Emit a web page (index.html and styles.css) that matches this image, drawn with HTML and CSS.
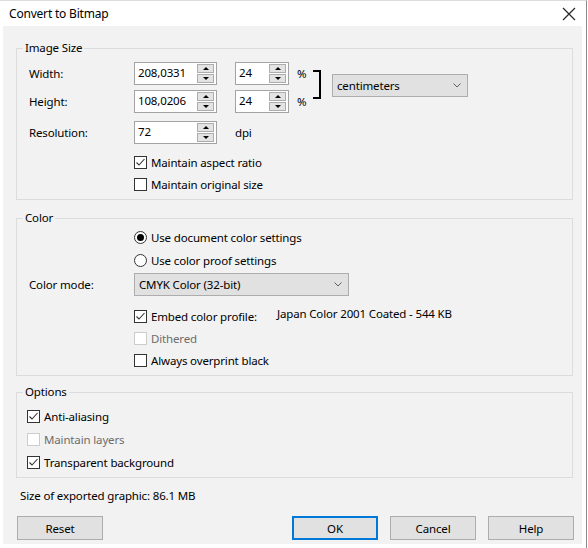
FILE: index.html
```html
<!DOCTYPE html>
<html>
<head>
<meta charset="utf-8">
<link rel="stylesheet" href="styles.css">
</head>
<body>
<div class="window">
  <div class="titlebar">
    <span class="title">Convert to Bitmap</span>
    <svg class="close" width="14" height="14" viewBox="0 0 14 14"><path d="M1 1L13 13M13 1L1 13" stroke="#2b2b2b" stroke-width="1.3" fill="none"/></svg>
  </div>
  <div class="client">
    <fieldset class="group">
      <legend>Image Size</legend>
      <div class="body body-size">
        <div class="size-top">
          <div class="size-rows">
            <div class="row">
              <span class="lbl">Width:</span>
              <div class="spin spin-wide"><span class="val">208,0331</span><span class="spin-btns"><span class="sb"><i class="up"></i></span><span class="sb"><i class="down"></i></span></span></div>
              <div class="spin spin-pct"><span class="val">24</span><span class="spin-btns"><span class="sb"><i class="up"></i></span><span class="sb"><i class="down"></i></span></span></div>
              <span class="unit">%</span>
            </div>
            <div class="row">
              <span class="lbl">Height:</span>
              <div class="spin spin-wide"><span class="val">108,0206</span><span class="spin-btns"><span class="sb"><i class="up"></i></span><span class="sb"><i class="down"></i></span></span></div>
              <div class="spin spin-pct"><span class="val">24</span><span class="spin-btns"><span class="sb"><i class="up"></i></span><span class="sb"><i class="down"></i></span></span></div>
              <span class="unit">%</span>
            </div>
          </div>
          <div class="bracket"></div>
          <div class="dropdown dd-units"><span>centimeters</span><svg class="chev" width="8" height="5" viewBox="0 0 8 5"><path d="M0.5 0.5L4 4L7.5 0.5" stroke="#606060" fill="none"/></svg></div>
        </div>
        <div class="row row-res">
          <span class="lbl">Resolution:</span>
          <div class="spin spin-wide"><span class="val">72</span><span class="spin-btns"><span class="sb"><i class="up"></i></span><span class="sb"><i class="down"></i></span></span></div>
          <span class="dpi">dpi</span>
        </div>
        <div class="checks indent">
          <label class="check"><span class="box"><svg width="13" height="13" viewBox="0 0 13 13"><path d="M2.5 6.5L5 9L10.5 3" stroke="#333" stroke-width="1.1" fill="none"/></svg></span>Maintain aspect ratio</label>
          <label class="check"><span class="box"></span>Maintain original size</label>
        </div>
      </div>
    </fieldset>

    <fieldset class="group group-color">
      <legend>Color</legend>
      <div class="body body-color">
        <label class="radio indent r1"><span class="circle on"></span>Use document color settings</label>
        <label class="radio indent r2"><span class="circle"></span>Use color proof settings</label>
        <div class="row row-mode">
          <span class="lbl">Color mode:</span>
          <div class="dropdown dd-mode"><span>CMYK Color (32-bit)</span><svg class="chev" width="8" height="5" viewBox="0 0 8 5"><path d="M0.5 0.5L4 4L7.5 0.5" stroke="#606060" fill="none"/></svg></div>
        </div>
        <div class="checks indent color-checks">
          <div class="embed-row">
            <label class="check"><span class="box"><svg width="13" height="13" viewBox="0 0 13 13"><path d="M2.5 6.5L5 9L10.5 3" stroke="#333" stroke-width="1.1" fill="none"/></svg></span>Embed color profile:</label>
            <span class="profile">Japan Color 2001 Coated - 544 KB</span>
          </div>
          <label class="check disabled"><span class="box"></span>Dithered</label>
          <label class="check"><span class="box"></span>Always overprint black</label>
        </div>
      </div>
    </fieldset>

    <fieldset class="group group-options">
      <legend>Options</legend>
      <div class="body body-options">
        <label class="check"><span class="box"><svg width="13" height="13" viewBox="0 0 13 13"><path d="M2.5 6.5L5 9L10.5 3" stroke="#333" stroke-width="1.1" fill="none"/></svg></span>Anti-aliasing</label>
        <label class="check disabled"><span class="box"></span>Maintain layers</label>
        <label class="check"><span class="box"><svg width="13" height="13" viewBox="0 0 13 13"><path d="M2.5 6.5L5 9L10.5 3" stroke="#333" stroke-width="1.1" fill="none"/></svg></span>Transparent background</label>
      </div>
    </fieldset>

    <div class="size-info">Size of exported graphic: 86.1 MB</div>

    <div class="buttons">
      <button class="btn">Reset</button>
      <div class="btn-group">
        <button class="btn btn-default">OK</button>
        <button class="btn">Cancel</button>
        <button class="btn">Help</button>
      </div>
    </div>
  </div>
</div>
</body>
</html>
```

FILE: styles.css
```css
* { box-sizing: border-box; }

body {
  margin: 0;
  background: #ffffff;
  font-family: "Noto Sans", "Open Sans", sans-serif;
  font-size: 11.5px;
  letter-spacing: -0.15px;
  color: #000000;
}

.window {
  width: 587px;
  height: 548px;
  border-top: 1px solid #dcdcdc;
  border-right: 1px solid #8a8a8a;
  display: flex;
  flex-direction: column;
}

.titlebar {
  height: 25px;
  display: flex;
  align-items: center;
  justify-content: space-between;
  padding: 0 10px 0 9px;
}

.title { font-size: 12px; line-height: 16px; letter-spacing: -0.2px; }

.close { display: block; margin-top: 1px; }

.client {
  flex: 1;
  margin: 0 4px 4px 3px;
  background: #f2f2f2;
  padding: 14px 9px 0 13px;
  display: flex;
  flex-direction: column;
}

.group {
  margin: 0;
  padding: 0;
  border: 1px solid #dcdcdc;
  min-width: 0;
}

.group legend {
  margin-left: 6px;
  padding: 0 2px;
  line-height: 16px;
  height: 16px;
}

.group-color { margin-top: 10px; }
.group-options { margin-top: 8px; }

.body-size { padding: 6px 0 4px 12px; }
.body-color { padding: 0 0 4px 12px; }
.body-options { padding: 5px 0 3px 10px; }

.row {
  display: flex;
  align-items: center;
  height: 23px;
}

.size-top {
  display: flex;
  align-items: flex-start;
}

.size-rows {
  display: flex;
  flex-direction: column;
  gap: 5px;
}

.lbl { width: 105px; flex: none; }

.spin {
  display: flex;
  align-items: stretch;
  height: 23px;
  background: #ffffff;
  border: 1px solid #a3a3a3;
  flex: none;
}

.spin-wide { width: 83px; }
.spin-pct { width: 54px; margin-left: 18px; }

.val {
  flex: 1;
  padding-left: 3px;
  line-height: 19px;
}

.spin-btns {
  width: 17px;
  margin: 1px 2px 1px 0;
  display: flex;
  flex-direction: column;
  gap: 1px;
}

.sb {
  flex: 1;
  background: #e3e3e3;
  border: 1px solid #adadad;
  display: flex;
  align-items: center;
  justify-content: center;
}

.sb i {
  display: block;
  width: 0;
  height: 0;
  border-left: 3px solid transparent;
  border-right: 3px solid transparent;
}

.sb i.up { border-bottom: 3px solid #000; }
.sb i.down { border-top: 3px solid #000; }

.unit { width: 24px; padding-left: 8px; flex: none; }

.bracket {
  width: 8px;
  height: 29px;
  margin-top: 8px;
  border: 2px solid #000;
  border-left: none;
  flex: none;
}

.dropdown {
  height: 23px;
  background: #e1e1e1;
  border: 1px solid #adadad;
  display: flex;
  align-items: center;
  justify-content: space-between;
  padding: 0 6px 0 4px;
  flex: none;
}

.dd-units { width: 136px; margin-left: 11px; margin-top: 12px; }
.dd-mode { width: 215px; }

.row-res { margin-top: 8px; }
.dpi { margin-left: 18px; }

.indent { margin-left: 105px; }

.checks {
  display: flex;
  flex-direction: column;
  margin-top: 7px;
}

.check {
  display: flex;
  align-items: center;
  height: 22px;
}

.body-options .check { height: 23px; }

.box {
  width: 13px;
  height: 13px;
  border: 1px solid #333333;
  background: #ffffff;
  margin-right: 4px;
  flex: none;
  position: relative;
}

.box svg { display: block; margin: -1px 0 0 -1px; }

.check.disabled { color: #6d6d6d; }
.check.disabled .box { border-color: #cccccc; }

.radio {
  display: flex;
  align-items: center;
  height: 22px;
}

.r2 { margin-top: 1px; }

.circle {
  width: 13px;
  height: 13px;
  border: 1px solid #333333;
  border-radius: 50%;
  background: #ffffff;
  margin-right: 4px;
  display: flex;
  align-items: center;
  justify-content: center;
}

.circle.on::after {
  content: "";
  width: 7px;
  height: 7px;
  border-radius: 50%;
  background: #000000;
}

.row-mode { margin-top: 2px; }

.color-checks { margin-top: 9px; }

.embed-row {
  display: flex;
  align-items: center;
}

.profile { margin-left: 20px; margin-top: -5px; }

.size-info {
  margin: 10px 0 0 4px;
  line-height: 16px;
}

.buttons {
  display: flex;
  justify-content: space-between;
  margin: 12px -1px 0 1px;
}

.btn-group { display: flex; gap: 12px; }

.btn {
  width: 86px;
  height: 24px;
  background: #e1e1e1;
  border: 1px solid #adadad;
  font-family: inherit;
  font-size: 11.5px;
  letter-spacing: -0.15px;
  color: #000;
  padding: 0;
}

.btn-default { border: 2px solid #0078d7; }
```
